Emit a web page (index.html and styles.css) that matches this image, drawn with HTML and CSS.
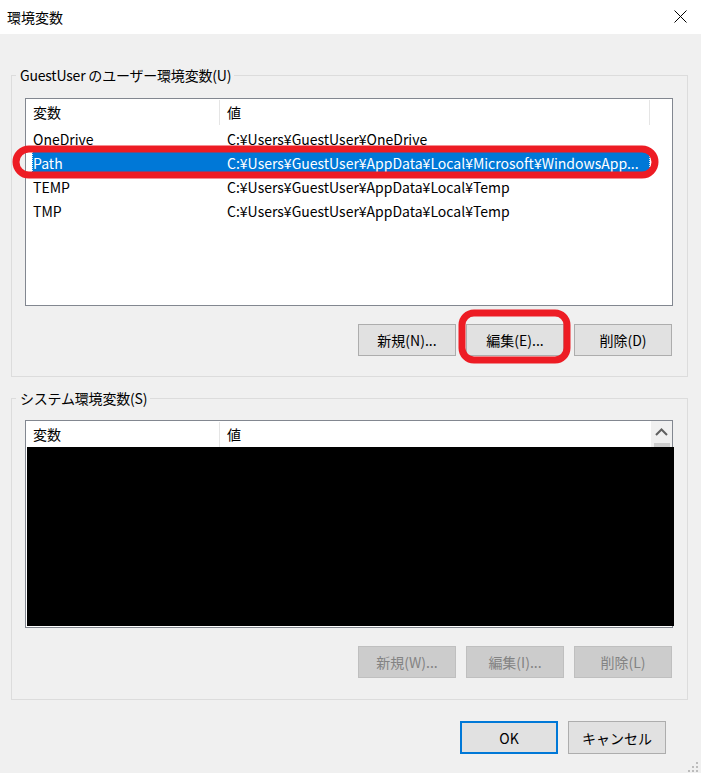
FILE: index.html
```html
<!DOCTYPE html>
<html lang="ja">
<head>
<meta charset="utf-8">
<title>環境変数</title>
<link rel="stylesheet" href="styles.css">
</head>
<body>
<div class="window">
  <div class="titlebar">
    <span class="title">環境変数</span>
    <svg class="close" width="13" height="13" viewBox="0 0 13 13"><path d="M0.5 0.5 L12.5 12.5 M12.5 0.5 L0.5 12.5" stroke="#000" stroke-width="1" fill="none"/></svg>
  </div>
  <div class="content">
    <div class="group g1">
      <span class="legend">GuestUser のユーザー環境変数(U)</span>
      <div class="listview">
        <div class="lv-header">
          <div class="hcell hc1">変数</div>
          <div class="hcell hc2">値</div>
        </div>
        <div class="row"><span class="c1">OneDrive</span><span class="c2">C:¥Users¥GuestUser¥OneDrive</span></div>
        <div class="row selected"><span class="c1">Path</span><span class="c2">C:¥Users¥GuestUser¥AppData¥Local¥Microsoft¥WindowsApp...</span></div>
        <div class="row"><span class="c1">TEMP</span><span class="c2">C:¥Users¥GuestUser¥AppData¥Local¥Temp</span></div>
        <div class="row"><span class="c1">TMP</span><span class="c2">C:¥Users¥GuestUser¥AppData¥Local¥Temp</span></div>
      </div>
      <div class="btnrow">
        <button class="btn">新規(N)...</button>
        <button class="btn">編集(E)...</button>
        <button class="btn">削除(D)</button>
      </div>
    </div>

    <div class="group g2">
      <span class="legend">システム環境変数(S)</span>
      <div class="listview">
        <div class="lv-top">
          <div class="lv-header lv-header2">
            <div class="hcell hc1">変数</div>
            <div class="hcell hc2b">値</div>
          </div>
          <div class="vscroll">
            <svg class="up" width="13" height="8" viewBox="0 0 13 8"><path d="M1 7 L6.5 1.5 L12 7" stroke="#606060" stroke-width="2" fill="none"/></svg>
            <div class="thumb"></div>
          </div>
        </div>
        <div class="redacted"></div>
      </div>
      <div class="btnrow">
        <button class="btn" disabled>新規(W)...</button>
        <button class="btn" disabled>編集(I)...</button>
        <button class="btn" disabled>削除(L)</button>
      </div>
    </div>

    <div class="dlgrow">
      <button class="btn btn-default">OK</button>
      <button class="btn">キャンセル</button>
    </div>
  </div>

  <svg class="annot" width="701" height="773" viewBox="0 0 701 773">
    <rect x="16" y="149" width="639" height="26" rx="13" ry="13" fill="none" stroke="#ed1c24" stroke-width="7"/>
    <rect x="462" y="313" width="105" height="47" rx="12" ry="12" fill="none" stroke="#ed1c24" stroke-width="7"/>
  </svg>

  <svg class="grip" width="11" height="11" viewBox="0 0 11 11">
    <rect x="9" y="1" width="2" height="2" fill="#bcbcbc"/>
    <rect x="5" y="5" width="2" height="2" fill="#bcbcbc"/>
    <rect x="9" y="5" width="2" height="2" fill="#bcbcbc"/>
    <rect x="1" y="9" width="2" height="2" fill="#bcbcbc"/>
    <rect x="5" y="9" width="2" height="2" fill="#bcbcbc"/>
    <rect x="9" y="9" width="2" height="2" fill="#bcbcbc"/>
  </svg>
</div>
</body>
</html>
```

FILE: styles.css
```css
* { box-sizing: border-box; }

html, body {
  margin: 0;
  padding: 0;
  background: #f0f0f0;
}

body {
  font-family: "Noto Sans CJK JP", "Noto Sans", sans-serif;
  font-size: 14px;
  color: #000;
}

.window {
  position: relative;
  width: 701px;
  height: 773px;
  background: #f0f0f0;
  overflow: hidden;
}

.titlebar {
  height: 34px;
  background: #fff;
  display: flex;
  align-items: center;
  justify-content: space-between;
  padding: 0 14px 0 7px;
}

.title {
  font-size: 14px;
  line-height: 20px;
}

.close {
  display: block;
  margin-top: -1px;
}

.content {
  padding: 41px 0 0 11px;
}

.group {
  position: relative;
  width: 677px;
  border: 1px solid #dcdcdc;
  padding: 22px 13px 20px 13px;
}

.g2 {
  margin-top: 21px;
  padding-top: 21px;
  padding-bottom: 21px;
}

.legend {
  position: absolute;
  top: -12px;
  left: 4px;
  padding: 0 3px 0 4px;
  background: #f0f0f0;
  line-height: 22px;
  white-space: nowrap;
  letter-spacing: -0.2px;
}

.listview {
  width: 648px;
  height: 208px;
  border: 1px solid #828790;
  background: #fff;
}

.lv-header {
  display: flex;
  height: 28px;
  padding-top: 1px;
  align-items: flex-start;
}

.hcell {
  height: 25px;
  line-height: 25px;
  border-right: 1px solid #e5e5e5;
  padding-left: 7px;
  white-space: nowrap;
}

.hc1 { width: 194px; }
.hc2 { width: 430px; }
.hc2b { flex: 1; border-right: none; }

.row {
  display: flex;
  height: 24px;
  line-height: 24px;
  margin-left: 6px;
  width: 618px;
  padding-left: 1px;
  white-space: nowrap;
}

.row .c1 { width: 194px; flex: none; }
.row .c2 { flex: 1; overflow: hidden; }

.row.selected {
  background: #0078d7;
  color: #fff;
  outline: 1px dotted #d8e8f8;
  outline-offset: -1px;
}

.lv-top {
  display: flex;
  height: 26px;
}

.lv-header2 {
  flex: 1;
  height: 26px;
}

.vscroll {
  width: 21px;
  height: 26px;
  background: #f0f0f0;
  display: flex;
  flex-direction: column;
  align-items: center;
}

.vscroll .up {
  display: block;
  margin-top: 7px;
}

.vscroll .thumb {
  margin-top: 7px;
  width: 16px;
  height: 4px;
  background: #cdcdcd;
}

.redacted {
  margin-left: 1px;
  width: 647px;
  height: 179px;
  background: #000;
}

.btnrow {
  display: flex;
  justify-content: flex-end;
  gap: 10px;
  margin-top: 18px;
  padding-right: 2px;
}

.btn {
  width: 98px;
  height: 32px;
  background: #e1e1e1;
  border: 1px solid #adadad;
  font-family: "Noto Sans CJK JP", "Noto Sans", sans-serif;
  font-size: 14px;
  color: #000;
  padding: 0;
  margin: 0;
}

.btn:disabled {
  background: #cccccc;
  border-color: #bfbfbf;
  color: #838383;
}

.dlgrow {
  display: flex;
  justify-content: flex-end;
  gap: 10px;
  margin-top: 21px;
  padding-right: 35px;
}

.dlgrow .btn {
  height: 33px;
}

.btn-default {
  border: 2px solid #0078d7;
}

.annot {
  position: absolute;
  left: 0;
  top: 0;
  pointer-events: none;
}

.grip {
  position: absolute;
  right: 3px;
  bottom: 1px;
}
```
